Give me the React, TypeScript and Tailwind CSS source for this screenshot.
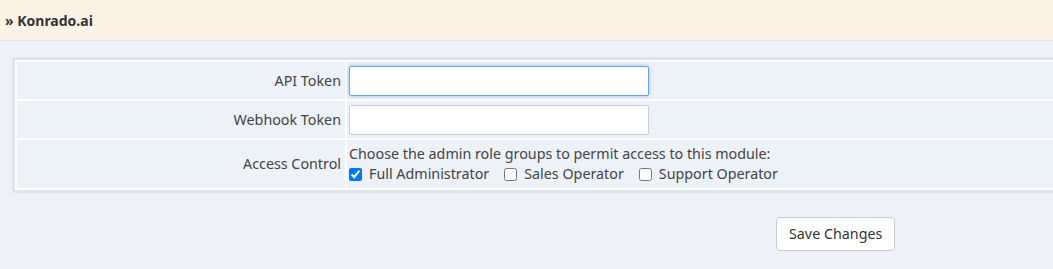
import React from "react";

const font = { fontFamily: '"Noto Sans", "Open Sans", Arial, sans-serif' };

function Row({ label, children, tall }: { label: string; children: React.ReactNode; tall?: boolean }) {
  return (
    <div className={`flex gap-[2px] ${tall ? "h-[48px]" : "h-[37px]"}`}>
      <div className="w-[328px] shrink-0 bg-[#edf1f8] flex items-center justify-end pr-[4px] text-[14.3px] text-[#444]">
        {label}
      </div>
      <div className="flex-1 bg-[#edf1f8] flex items-center pl-[2px]">{children}</div>
    </div>
  );
}

export default function App() {
  return (
    <div className="w-[1053px] h-[269px] overflow-hidden bg-[#eef1f8] text-[#333]" style={font}>
      <div className="h-[41px] bg-[#fcf3e6] border-b border-[#e4e4e4] flex items-center pl-[5px]">
        <span className="text-[14px] font-bold text-[#333]">» Konrado.ai</span>
      </div>
      <div className="pt-[16px] pl-[12px]">
        <div className="w-[1060px] rounded-[3px] border-[3px] border-[#dfe4ea] bg-white p-[2px] flex flex-col gap-[2px]">
          <Row label="API Token">
            <input
              type="text"
              className="w-[300px] h-[30px] bg-white border border-[#66a3e6] rounded-[2px] shadow-[0_0_4px_rgba(102,163,230,0.6)] outline-none"
            />
          </Row>
          <Row label="Webhook Token">
            <input type="text" className="w-[300px] h-[30px] bg-white border border-[#ccc] rounded-[2px] outline-none" />
          </Row>
          <Row label="Access Control" tall>
            <div className="flex flex-col text-[14.3px] text-[#444] leading-[20px]">
              <div>Choose the admin role groups to permit access to this module:</div>
              <div className="flex items-center">
                <label className="flex items-center gap-[7px] mr-[15px]">
                  <input type="checkbox" defaultChecked className="m-0 w-[13px] h-[13px]" />
                  Full Administrator
                </label>
                <label className="flex items-center gap-[7px] mr-[15px]">
                  <input type="checkbox" className="m-0 w-[13px] h-[13px]" />
                  Sales Operator
                </label>
                <label className="flex items-center gap-[7px]">
                  <input type="checkbox" className="m-0 w-[13px] h-[13px]" />
                  Support Operator
                </label>
              </div>
            </div>
          </Row>
        </div>
      </div>
      <div className="flex pl-[776px] pt-[24px]">
        <button className="h-[34px] px-[12px] bg-white border border-[#ccc] rounded-[4px] text-[14.3px] text-[#333]">
          Save Changes
        </button>
      </div>
    </div>
  );
}
